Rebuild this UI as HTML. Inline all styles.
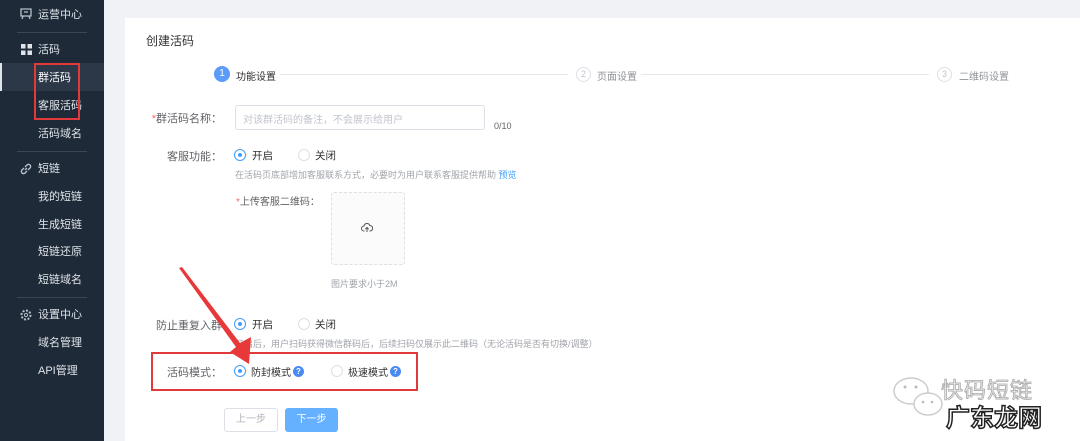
<!DOCTYPE html>
<html><head><meta charset="utf-8"><style>
*{margin:0;padding:0;box-sizing:border-box}
html,body{width:1080px;height:441px;overflow:hidden}
body{background:#f0f2f5;font-family:"Liberation Sans","Noto Sans CJK SC",sans-serif;position:relative;font-size:12px;color:#606266}
.a{position:absolute;white-space:nowrap}
#sb{position:absolute;left:0;top:0;width:104px;height:441px;background:#1f2a38}
.si{position:absolute;left:38px;color:#dfe4ea;font-size:11px;line-height:14px}
.hr{position:absolute;left:17px;width:70px;height:1px;background:#3a4656}
.card{position:absolute;left:125px;top:18px;width:960px;height:430px;background:#fff}
.radio{position:absolute;width:12px;height:12px;border-radius:50%;border:1px solid #dcdfe6;background:#fff}
.radio.on{border-color:#409eff}
.radio.on::after{content:"";position:absolute;left:3px;top:3px;width:4px;height:4px;border-radius:50%;background:#409eff}
.q{position:absolute;width:11px;height:11px;border-radius:50%;background:#4a8af4;color:#fff;font-size:8px;line-height:11px;text-align:center;font-weight:bold}
.lbl{color:#606266;font-size:11px;text-align:right}
.help{color:#a0a4aa;font-size:9px}
.rt{font-size:10.5px;color:#303133}
</style></head><body>
<div id="sb">
<div class="a" style="left:0;top:63px;width:104px;height:28px;background:#2c3747"></div>
<div class="a" style="left:0;top:63px;width:2px;height:28px;background:#dfe4ea"></div>
<svg class="a" style="left:20px;top:8px" width="12" height="12" viewBox="0 0 12 12"><path d="M1 1h10v7H1z M3 8l-1 3 M9 8l1 3 M4 4h4" stroke="#b8c0ca" fill="none" stroke-width="1.3"/></svg>
<div class="si" style="top:8px">运营中心</div>
<div class="hr" style="top:32px"></div>
<svg class="a" style="left:21px;top:44px" width="11" height="11" viewBox="0 0 11 11"><rect x="0" y="0" width="4.5" height="4.5" fill="#dfe4ea"/><rect x="6.5" y="0" width="4.5" height="4.5" fill="#dfe4ea"/><rect x="0" y="6.5" width="4.5" height="4.5" fill="#dfe4ea"/><rect x="6.5" y="6.5" width="4.5" height="4.5" fill="#dfe4ea"/></svg>
<div class="si" style="top:43px">活码</div>
<div class="si" style="top:71px;color:#fff">群活码</div>
<div class="si" style="top:99px">客服活码</div>
<div class="si" style="top:127px">活码域名</div>
<div class="hr" style="top:151px"></div>
<svg class="a" style="left:20px;top:163px" width="12" height="12" viewBox="0 0 12 12"><path d="M5 7l2-2 M4 5l-2 2a2 2 0 003 3l2-2 M8 7l2-2a2 2 0 00-3-3L5 4" stroke="#b8c0ca" fill="none" stroke-width="1.4"/></svg>
<div class="si" style="top:162px">短链</div>
<div class="si" style="top:190px">我的短链</div>
<div class="si" style="top:218px">生成短链</div>
<div class="si" style="top:245px">短链还原</div>
<div class="si" style="top:273px">短链域名</div>
<div class="hr" style="top:297px"></div>
<svg class="a" style="left:20px;top:309px" width="12" height="12" viewBox="0 0 12 12"><circle cx="6" cy="6" r="4.5" stroke="#b8c0ca" stroke-width="2" stroke-dasharray="2 1.5" fill="none"/><circle cx="6" cy="6" r="1.6" stroke="#b8c0ca" fill="none"/></svg>
<div class="si" style="top:308px">设置中心</div>
<div class="si" style="top:336px">域名管理</div>
<div class="si" style="top:364px">API管理</div>
<div class="a" style="left:34px;top:63px;width:46px;height:57px;border:2px solid #e23a3a"></div>
</div>

<div class="card"></div>
<div class="a" style="left:146px;top:32px;font-size:12px;color:#303133">创建活码</div>

<div class="a" style="left:214px;top:66px;width:16px;height:16px;border-radius:50%;background:#5a9cf8;color:#fff;font-size:10px;line-height:16px;text-align:center">1</div>
<div class="a" style="left:236px;top:68px;font-size:10px;color:#303133">功能设置</div>
<div class="a" style="left:280px;top:74px;width:288px;height:1px;background:#e4e7ed"></div>
<div class="a" style="left:576px;top:67px;width:15px;height:15px;border-radius:50%;border:1px solid #dcdfe6;color:#c0c4cc;font-size:9px;line-height:13px;text-align:center">2</div>
<div class="a" style="left:597px;top:68px;font-size:10px;color:#909399">页面设置</div>
<div class="a" style="left:641px;top:74px;width:288px;height:1px;background:#e4e7ed"></div>
<div class="a" style="left:937px;top:67px;width:15px;height:15px;border-radius:50%;border:1px solid #dcdfe6;color:#c0c4cc;font-size:9px;line-height:13px;text-align:center">3</div>
<div class="a" style="left:959px;top:68px;font-size:10px;color:#909399">二维码设置</div>

<div class="a lbl" style="left:150px;top:110px;width:72px"><span style="color:#f56c6c">*</span>群活码名称：</div>
<div class="a" style="left:235px;top:105px;width:250px;height:25px;border:1px solid #dcdfe6;border-radius:3px"></div>
<div class="a" style="left:243px;top:111px;font-size:10px;color:#c0c4cc">对该群活码的备注，不会展示给用户</div>
<div class="a" style="left:494px;top:121px;font-size:9px;color:#606266">0/10</div>

<div class="a lbl" style="left:150px;top:148px;width:72px">客服功能：</div>
<div class="radio on" style="left:234px;top:149px"></div>
<div class="a rt" style="left:252px;top:148px">开启</div>
<div class="radio" style="left:298px;top:149px"></div>
<div class="a rt" style="left:315px;top:148px">关闭</div>
<div class="a help" style="left:235px;top:168px">在活码页底部增加客服联系方式，必要时为用户联系客服提供帮助 <span style="color:#409eff">预览</span></div>

<div class="a" style="left:236px;top:193px;font-size:10px;color:#606266"><span style="color:#f56c6c">*</span>上传客服二维码：</div>
<div class="a" style="left:331px;top:192px;width:74px;height:73px;border:1px dashed #dcdfe6;background:#fbfbfc;border-radius:3px"></div>
<svg class="a" style="left:361px;top:222px" width="12" height="12" viewBox="0 0 12 12"><path d="M3.5 9H3a2.5 2.5 0 010-5 3 3 0 015.8-.5A2.3 2.3 0 019 9h-.5 M6 10V5.5 M4.3 7.2L6 5.5l1.7 1.7" stroke="#555" fill="none" stroke-width="1"/></svg>
<div class="a help" style="left:331px;top:277px;font-size:9px">图片要求小于2M</div>

<div class="a lbl" style="top:317px;width:72px;text-align:left;left:156px">防止重复入群</div>
<div class="radio on" style="left:234px;top:318px"></div>
<div class="a rt" style="left:252px;top:317px">开启</div>
<div class="radio" style="left:298px;top:318px"></div>
<div class="a rt" style="left:315px;top:317px">关闭</div>
<div class="a help" style="left:235px;top:337px">开启后，用户扫码获得微信群码后，后续扫码仅展示此二维码（无论活码是否有切换/调整）</div>

<div class="a lbl" style="left:150px;top:364px;width:72px">活码模式：</div>
<div class="radio on" style="left:234px;top:365px"></div>
<div class="a rt" style="left:251px;top:364px;font-size:10px">防封模式</div>
<div class="q" style="left:293px;top:366px">?</div>
<div class="radio" style="left:331px;top:365px"></div>
<div class="a rt" style="left:348px;top:364px;font-size:10px">极速模式</div>
<div class="q" style="left:390px;top:366px">?</div>
<div class="a" style="left:151px;top:352px;width:267px;height:39px;border:2px solid #e23a3a"></div>

<div class="a" style="left:224px;top:408px;width:54px;height:24px;border:1px solid #dcdfe6;border-radius:3px;color:#b0b3b8;font-size:10px;line-height:22px;text-align:center">上一步</div>
<div class="a" style="left:285px;top:408px;width:53px;height:24px;background:#66b1ff;border-radius:3px;color:#fff;font-size:10px;line-height:24px;text-align:center">下一步</div>

<svg class="a" style="left:0;top:0" width="1080" height="441"><polygon points="179,268 182,267 240,343 251,337 249,364 230,352 236,347" fill="#e8393a"/></svg>

<svg class="a" style="left:890px;top:372px" width="60" height="50" viewBox="0 0 60 50"><ellipse cx="21" cy="19" rx="17" ry="13" fill="#fff" stroke="#ccc" stroke-width="1.5"/><ellipse cx="38" cy="32" rx="14" ry="11" fill="#fff" stroke="#ccc" stroke-width="1.5"/><circle cx="15" cy="15" r="1.5" fill="#bbb"/><circle cx="26" cy="15" r="1.5" fill="#bbb"/><circle cx="33" cy="30" r="1.3" fill="#bbb"/><circle cx="42" cy="30" r="1.3" fill="#bbb"/></svg>
<div class="a" style="left:941px;top:373px;font-size:22px;color:#ececec;-webkit-text-stroke:0.8px #aaa;letter-spacing:1px">快码短链</div>
<div class="a" style="left:946px;top:398px;font-size:24px;font-weight:bold;color:#fff;-webkit-text-stroke:1.5px #222">广东龙网</div>
</body></html>
